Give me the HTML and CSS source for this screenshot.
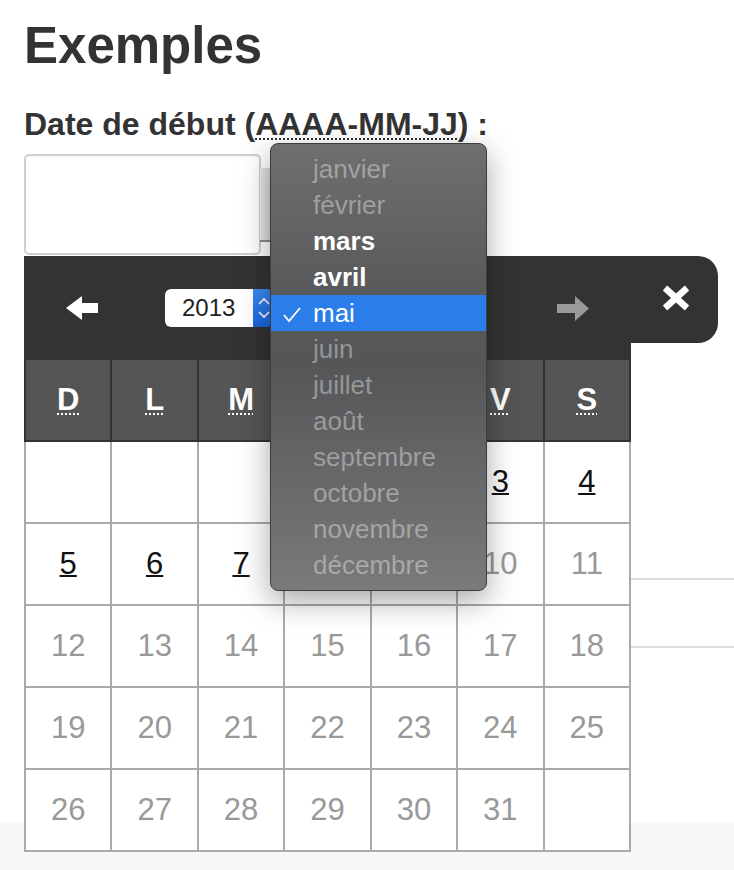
FILE: index.html
```html
<!DOCTYPE html>
<html lang="fr">
<head>
    <meta charset="UTF-8">
    <meta name="viewport" content="width=device-width, initial-scale=1.0">
    <title>Exemples</title>
    <link rel="stylesheet" href="styles.css">
</head>
<body>

    <!-- Form -->
    <div class="page">
        <h2 class="title">Exemples</h2>
        <label class="date-label" for="start">Date de début (<abbr title="année-mois-jour">AAAA-MM-JJ</abbr>) :</label>

        <div class="field">
            <input type="text" id="start" class="date-input">
            <span class="cal-btn"></span>

            <!-- Calendar popup -->
            <div class="cal">
                <div class="cal-head">
                    <svg class="prev" width="32" height="24" viewBox="0 0 32 24">
                        <polygon points="0,12 16,0 16,7 32,7 32,17 16,17 16,24" fill="#fff"/>
                    </svg>
                    <div class="year-select">
                        <span class="year">2013</span>
                        <span class="spin">
                            <svg width="20" height="38" viewBox="0 0 20 38">
                                <polyline points="6,15 11,10 16,15" fill="none" stroke="#fff" stroke-width="1.6"/>
                                <polyline points="6,23 11,28 16,23" fill="none" stroke="#fff" stroke-width="1.6"/>
                            </svg>
                        </span>
                    </div>
                    <svg class="next" width="32" height="25" viewBox="0 0 32 25">
                        <polygon points="0,8 18,8 18,0 32,12.5 18,25 18,17 0,17" fill="#999"/>
                    </svg>
                    <svg class="close" width="28" height="26" viewBox="0 0 28 26">
                        <line x1="3" y1="3" x2="25" y2="23" stroke="#fff" stroke-width="6.5"/>
                        <line x1="25" y1="3" x2="3" y2="23" stroke="#fff" stroke-width="6.5"/>
                    </svg>
                </div>

                <div class="cal-body">
                    <div class="weekdays">
                        <div><abbr title="dimanche">D</abbr></div>
                        <div><abbr title="lundi">L</abbr></div>
                        <div><abbr title="mardi">M</abbr></div>
                        <div><abbr title="mercredi">M</abbr></div>
                        <div><abbr title="jeudi">J</abbr></div>
                        <div><abbr title="vendredi">V</abbr></div>
                        <div><abbr title="samedi">S</abbr></div>
                    </div>
                    <div class="days">
                        <div></div><div></div><div></div>
                        <div><a href="#">1</a></div>
                        <div><a href="#">2</a></div>
                        <div><a href="#">3</a></div>
                        <div><a href="#">4</a></div>
                        <div><a href="#">5</a></div>
                        <div><a href="#">6</a></div>
                        <div><a href="#">7</a></div>
                        <div><a href="#">8</a></div>
                        <div><a href="#">9</a></div>
                        <div class="off">10</div>
                        <div class="off">11</div>
                        <div class="off">12</div>
                        <div class="off">13</div>
                        <div class="off">14</div>
                        <div class="off">15</div>
                        <div class="off">16</div>
                        <div class="off">17</div>
                        <div class="off">18</div>
                        <div class="off">19</div>
                        <div class="off">20</div>
                        <div class="off">21</div>
                        <div class="off">22</div>
                        <div class="off">23</div>
                        <div class="off">24</div>
                        <div class="off">25</div>
                        <div class="off">26</div>
                        <div class="off">27</div>
                        <div class="off">28</div>
                        <div class="off">29</div>
                        <div class="off">30</div>
                        <div class="off">31</div>
                        <div></div>
                    </div>
                </div>
            </div>
        </div>
    </div>

    <!-- Rest of the page, under the popup -->
    <div class="list">
        <div class="list-row first"></div>
        <div class="list-row"></div>
        <div class="list-row last"></div>
    </div>
    <div class="footer-band"></div>

    <!-- Month select, open -->
    <ul class="month-menu">
        <li class="dis">janvier</li>
        <li class="dis">février</li>
        <li class="on">mars</li>
        <li class="on">avril</li>
        <li class="sel">
            <svg class="check" width="18" height="16" viewBox="0 0 18 16">
                <polyline points="1,8 6,14 17,1" fill="none" stroke="#fff" stroke-width="1.8"/>
            </svg>mai
        </li>
        <li class="dis">juin</li>
        <li class="dis">juillet</li>
        <li class="dis">août</li>
        <li class="dis">septembre</li>
        <li class="dis">octobre</li>
        <li class="dis">novembre</li>
        <li class="dis">décembre</li>
    </ul>

</body>
</html>
```

FILE: styles.css
```css
* {
    margin: 0;
    padding: 0;
}

body {
    font-family: "Liberation Sans", Arial, sans-serif;
    color: #333;
    background: #fff;
    position: relative;
    overflow: hidden;
    height: 870px;
}

.page {
    padding: 17px 24px 0;
}

.title {
    font-size: 51px;
    line-height: 57px;
    font-weight: bold;
}

.date-label {
    display: block;
    margin-top: 32px;
    font-size: 32px;
    line-height: 37px;
    font-weight: bold;
}

.date-label abbr {
    text-decoration: underline dotted;
    text-decoration-thickness: 2px;
    text-underline-offset: 3px;
}

.field {
    position: relative;
    display: flex;
    align-items: center;
    margin-top: 11px;
}

.date-input {
    width: 237px;
    height: 101px;
    box-sizing: border-box;
    border: 2px solid #cfcfcf;
    border-radius: 5px;
    background: #fff;
    box-shadow: inset 0 1px 2px rgba(0, 0, 0, 0.05);
}

.cal-btn {
    width: 12px;
    height: 72px;
    margin-left: -1px;
    background: linear-gradient(90deg, #e9e9ec, #d5d5d9);
    border-bottom: 2px solid #8a8a8a;
}

/* Calendar */
.cal {
    position: absolute;
    top: calc(100% + 1px);
    left: 0;
    width: 694px;
    z-index: 1;
}

.cal-head {
    height: 87px;
    box-sizing: border-box;
    background: #333;
    border-radius: 0 20px 20px 0;
    display: flex;
    align-items: center;
    padding: 17px 0 0 42px;
}

.cal-head .prev {
    flex: none;
}

.year-select {
    display: flex;
    margin-left: 67px;
    height: 38px;
}

.year {
    width: 88px;
    box-sizing: border-box;
    background: #fff;
    border-radius: 6px 0 0 6px;
    font-size: 24px;
    line-height: 38px;
    color: #222;
    padding-left: 17px;
}

.spin {
    width: 20px;
    background: linear-gradient(#3b8bf6, #1664dc);
    border-radius: 0 6px 6px 0;
}

.cal-head .next {
    margin-left: 284px;
    flex: none;
}

.cal-head .close {
    flex: none;
    align-self: flex-start;
    margin-left: 73px;
    margin-top: 12px;
}

.cal-body {
    width: 607px;
    background: #333;
    padding-top: 17px;
}

.weekdays {
    display: grid;
    grid-template-columns: repeat(7, 1fr);
    gap: 2px;
    padding: 0 2px 2px;
}

.weekdays div {
    height: 80px;
    background: #555;
    color: #fff;
    font-size: 31px;
    font-weight: bold;
    display: flex;
    align-items: center;
    justify-content: center;
}

.weekdays abbr {
    text-decoration: underline dotted;
    text-decoration-thickness: 2px;
    text-underline-offset: 3px;
}

.days {
    display: grid;
    grid-template-columns: repeat(7, 1fr);
    gap: 2px;
    padding: 0 2px 2px;
    background: #aaa;
}

.days div {
    height: 80px;
    background: #fff;
    font-size: 31px;
    display: flex;
    align-items: center;
    justify-content: center;
}

.days a {
    color: #111;
    text-decoration-thickness: 2px;
}

.days .off {
    color: #999;
}

/* Page behind */
.list {
    margin-left: 24px;
}

.list-row {
    height: 68px;
    box-sizing: border-box;
    border-bottom: 2px solid #ddd;
}

.list-row.first {
    height: 325px;
}

.list-row.last {
    height: 174px;
    border-bottom: none;
}

.footer-band {
    height: 60px;
    background: #f7f7f7;
}

/* Month menu */
.month-menu {
    position: absolute;
    left: 270px;
    top: 143px;
    width: 217px;
    box-sizing: border-box;
    list-style: none;
    padding: 7px 0;
    border: 1px solid #3c3c3c;
    border-radius: 8px;
    background: linear-gradient(#6f6f6f 0%, #57585a 35%, #555658 50%, #7a7a7a 100%);
    box-shadow: 0 10px 30px rgba(0, 0, 0, 0.35);
    z-index: 2;
}

.month-menu li {
    position: relative;
    height: 36px;
    line-height: 36px;
    font-size: 26px;
    padding-left: 42px;
}

.month-menu .dis {
    color: rgba(255, 255, 255, 0.38);
}

.month-menu .on {
    color: #fff;
    font-weight: bold;
}

.month-menu .sel {
    color: #fff;
    background: #2b7de9;
}

.check {
    position: absolute;
    left: 12px;
    top: 12px;
}
```
